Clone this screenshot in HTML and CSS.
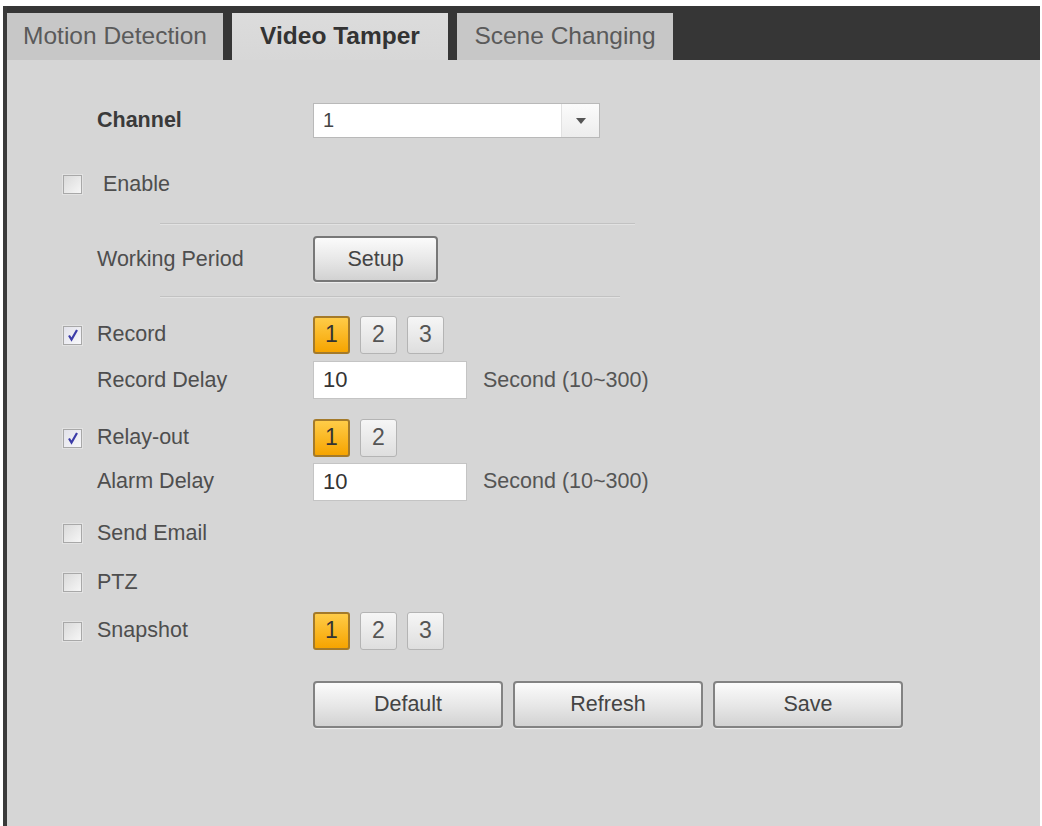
FILE: index.html
```html
<!DOCTYPE html>
<html lang="en">
<head>
<meta charset="utf-8">
<title>Video Tamper</title>
<link rel="stylesheet" href="styles.css">
</head>
<body>
<div class="frame">
  <div class="tabbar">
    <div class="tab">Motion Detection</div>
    <div class="tab tab-active">Video Tamper</div>
    <div class="tab">Scene Changing</div>
  </div>
  <div class="content">
    <div class="row row-channel">
      <div class="label label-plain label-bold">Channel</div>
      <div class="select">
        <span class="select-value">1</span>
        <span class="select-arrow"><svg width="10" height="6" viewBox="0 0 10 6"><path d="M0 0H10L5 6Z" fill="#555"/></svg></span>
      </div>
    </div>
    <div class="row row-enable">
      <div class="label"><span class="check"></span><span class="label-text label-text-wide">Enable</span></div>
    </div>
    <div class="divider divider-1"></div>
    <div class="row row-period">
      <div class="label label-plain">Working Period</div>
      <button class="btn btn-setup">Setup</button>
    </div>
    <div class="divider divider-2"></div>
    <div class="row row-record">
      <div class="label"><span class="check check-on"><svg width="14" height="14" viewBox="0 0 14 14"><path d="M3 7.5L5.5 11.5L11 2" fill="none" stroke="#3c3ca8" stroke-width="2.2"/></svg></span><span class="label-text">Record</span></div>
      <div class="nums">
        <span class="num num-on">1</span>
        <span class="num">2</span>
        <span class="num">3</span>
      </div>
    </div>
    <div class="row row-rdelay">
      <div class="label label-plain">Record Delay</div>
      <div class="input">10</div>
      <span class="unit">Second (10~300)</span>
    </div>
    <div class="row row-relay">
      <div class="label"><span class="check check-on"><svg width="14" height="14" viewBox="0 0 14 14"><path d="M3 7.5L5.5 11.5L11 2" fill="none" stroke="#3c3ca8" stroke-width="2.2"/></svg></span><span class="label-text">Relay-out</span></div>
      <div class="nums">
        <span class="num num-on">1</span>
        <span class="num">2</span>
      </div>
    </div>
    <div class="row row-adelay">
      <div class="label label-plain">Alarm Delay</div>
      <div class="input">10</div>
      <span class="unit">Second (10~300)</span>
    </div>
    <div class="row row-email">
      <div class="label"><span class="check"></span><span class="label-text">Send Email</span></div>
    </div>
    <div class="row row-ptz">
      <div class="label"><span class="check"></span><span class="label-text">PTZ</span></div>
    </div>
    <div class="row row-snap">
      <div class="label"><span class="check"></span><span class="label-text">Snapshot</span></div>
      <div class="nums">
        <span class="num num-on">1</span>
        <span class="num">2</span>
        <span class="num">3</span>
      </div>
    </div>
    <div class="row row-actions">
      <div class="label"></div>
      <div class="actions">
        <button class="btn btn-action">Default</button>
        <button class="btn btn-action">Refresh</button>
        <button class="btn btn-action">Save</button>
      </div>
    </div>
  </div>
</div>
</body>
</html>
```

FILE: styles.css
```css
html, body {
  margin: 0;
  padding: 0;
  background: #ffffff;
}
body {
  font-family: "Liberation Sans", Arial, sans-serif;
  width: 1042px;
  height: 826px;
  overflow: hidden;
}
.frame {
  margin: 6px 0 0 3px;
  width: 1037px;
  height: 820px;
  border-left: 4px solid #3a3a3a;
  box-sizing: border-box;
  display: flex;
  flex-direction: column;
}
.tabbar {
  height: 54px;
  background: #363636;
  padding-top: 7px;
  box-sizing: border-box;
  display: flex;
  gap: 9px;
}
.tab {
  width: 216px;
  height: 47px;
  background: #c7c7c7;
  color: #5a5a5a;
  font-size: 24.5px;
  display: flex;
  align-items: center;
  justify-content: center;
  padding-bottom: 2px;
  box-sizing: border-box;
}
.tab-active {
  background: linear-gradient(#dcdcdc, #d7d7d7);
  color: #333333;
  font-weight: bold;
}
.content {
  flex: 1;
  background: #d6d6d6;
  display: flex;
  flex-direction: column;
  padding-left: 56px;
  color: #4e4e4e;
  font-size: 21.5px;
}
.row {
  display: flex;
  align-items: center;
}
.label {
  width: 250px;
  flex: none;
  display: flex;
  align-items: center;
}
.label-plain {
  padding-left: 34px;
  box-sizing: border-box;
}
.label-bold {
  font-weight: bold;
  color: #3a3a3a;
}
.label-text {
  margin-left: 15px;
}
.label-text-wide {
  margin-left: 21px;
}
.check {
  width: 17px;
  height: 17px;
  border: 1px solid #a8a8a8;
  background: linear-gradient(135deg, #dadada, #f6f6f6);
  box-shadow: 0 0 0 1px #e2e2e2;
  display: flex;
  align-items: center;
  justify-content: center;
  margin-top: 1px;
}
.check-on {
  background: linear-gradient(135deg, #e2e2ea, #f8f8fb);
}
.row-channel { margin-top: 43px; height: 35px; }
.row-enable { margin-top: 30px; height: 32px; }
.divider {
  height: 0;
  border-top: 1px solid #c2c2c2;
  border-bottom: 1px solid #e2e2e2;
  margin-left: 97px;
}
.divider-1 { margin-top: 23px; width: 475px; }
.divider-2 { margin-top: 14px; width: 460px; }
.row-period { margin-top: 11px; height: 46px; }
.row-record { margin-top: 17px; height: 39px; }
.row-rdelay { margin-top: 7px; height: 38px; }
.row-relay { margin-top: 19px; height: 39px; }
.row-adelay { margin-top: 6px; height: 37px; }
.row-email { margin-top: 14px; height: 38px; }
.row-ptz { margin-top: 11px; height: 38px; }
.row-snap { margin-top: 10px; height: 39px; }
.row-actions { margin-top: 31px; height: 47px; }

.select {
  width: 287px;
  height: 35px;
  background: #ffffff;
  border: 1px solid #b9b9b9;
  box-sizing: border-box;
  display: flex;
  align-items: stretch;
}
.select-value {
  flex: 1;
  display: flex;
  align-items: center;
  padding-left: 9px;
  font-size: 20px;
  color: #444;
}
.select-arrow {
  width: 37px;
  border-left: 1px solid #e2e2e2;
  background: linear-gradient(#fbfbfb, #ededed);
  display: flex;
  align-items: center;
  justify-content: center;
}
.btn {
  font-family: "Liberation Sans", Arial, sans-serif;
  font-size: 21.5px;
  color: #444;
  border: 2px solid #787878;
  border-radius: 4px;
  background: linear-gradient(#fbfbfb, #e6e6e6 55%, #d2d2d2);
  padding: 0;
  margin: 0;
  box-shadow: 0 1px 1px rgba(255,255,255,0.6);
}
.btn-setup {
  width: 125px;
  height: 46px;
}
.actions {
  display: flex;
  gap: 10px;
}
.btn-action {
  width: 190px;
  height: 47px;
  border-color: #828282;
}
.nums {
  display: flex;
  gap: 10px;
}
.num {
  width: 37px;
  height: 38px;
  box-sizing: border-box;
  border: 1px solid #b4b4b4;
  border-radius: 3px;
  background: linear-gradient(#f6f6f6, #dedede);
  color: #555;
  font-size: 23px;
  display: flex;
  align-items: center;
  justify-content: center;
}
.num-on {
  border: 2px solid #a47a2a;
  background: linear-gradient(#ffcc48, #f6a400);
  color: #333;
}
.input {
  width: 154px;
  height: 38px;
  box-sizing: border-box;
  background: #ffffff;
  border: 1px solid #c4c4c4;
  padding-left: 9px;
  display: flex;
  align-items: center;
  font-size: 22px;
  color: #333;
}
.unit {
  margin-left: 16px;
  color: #555;
}
```
